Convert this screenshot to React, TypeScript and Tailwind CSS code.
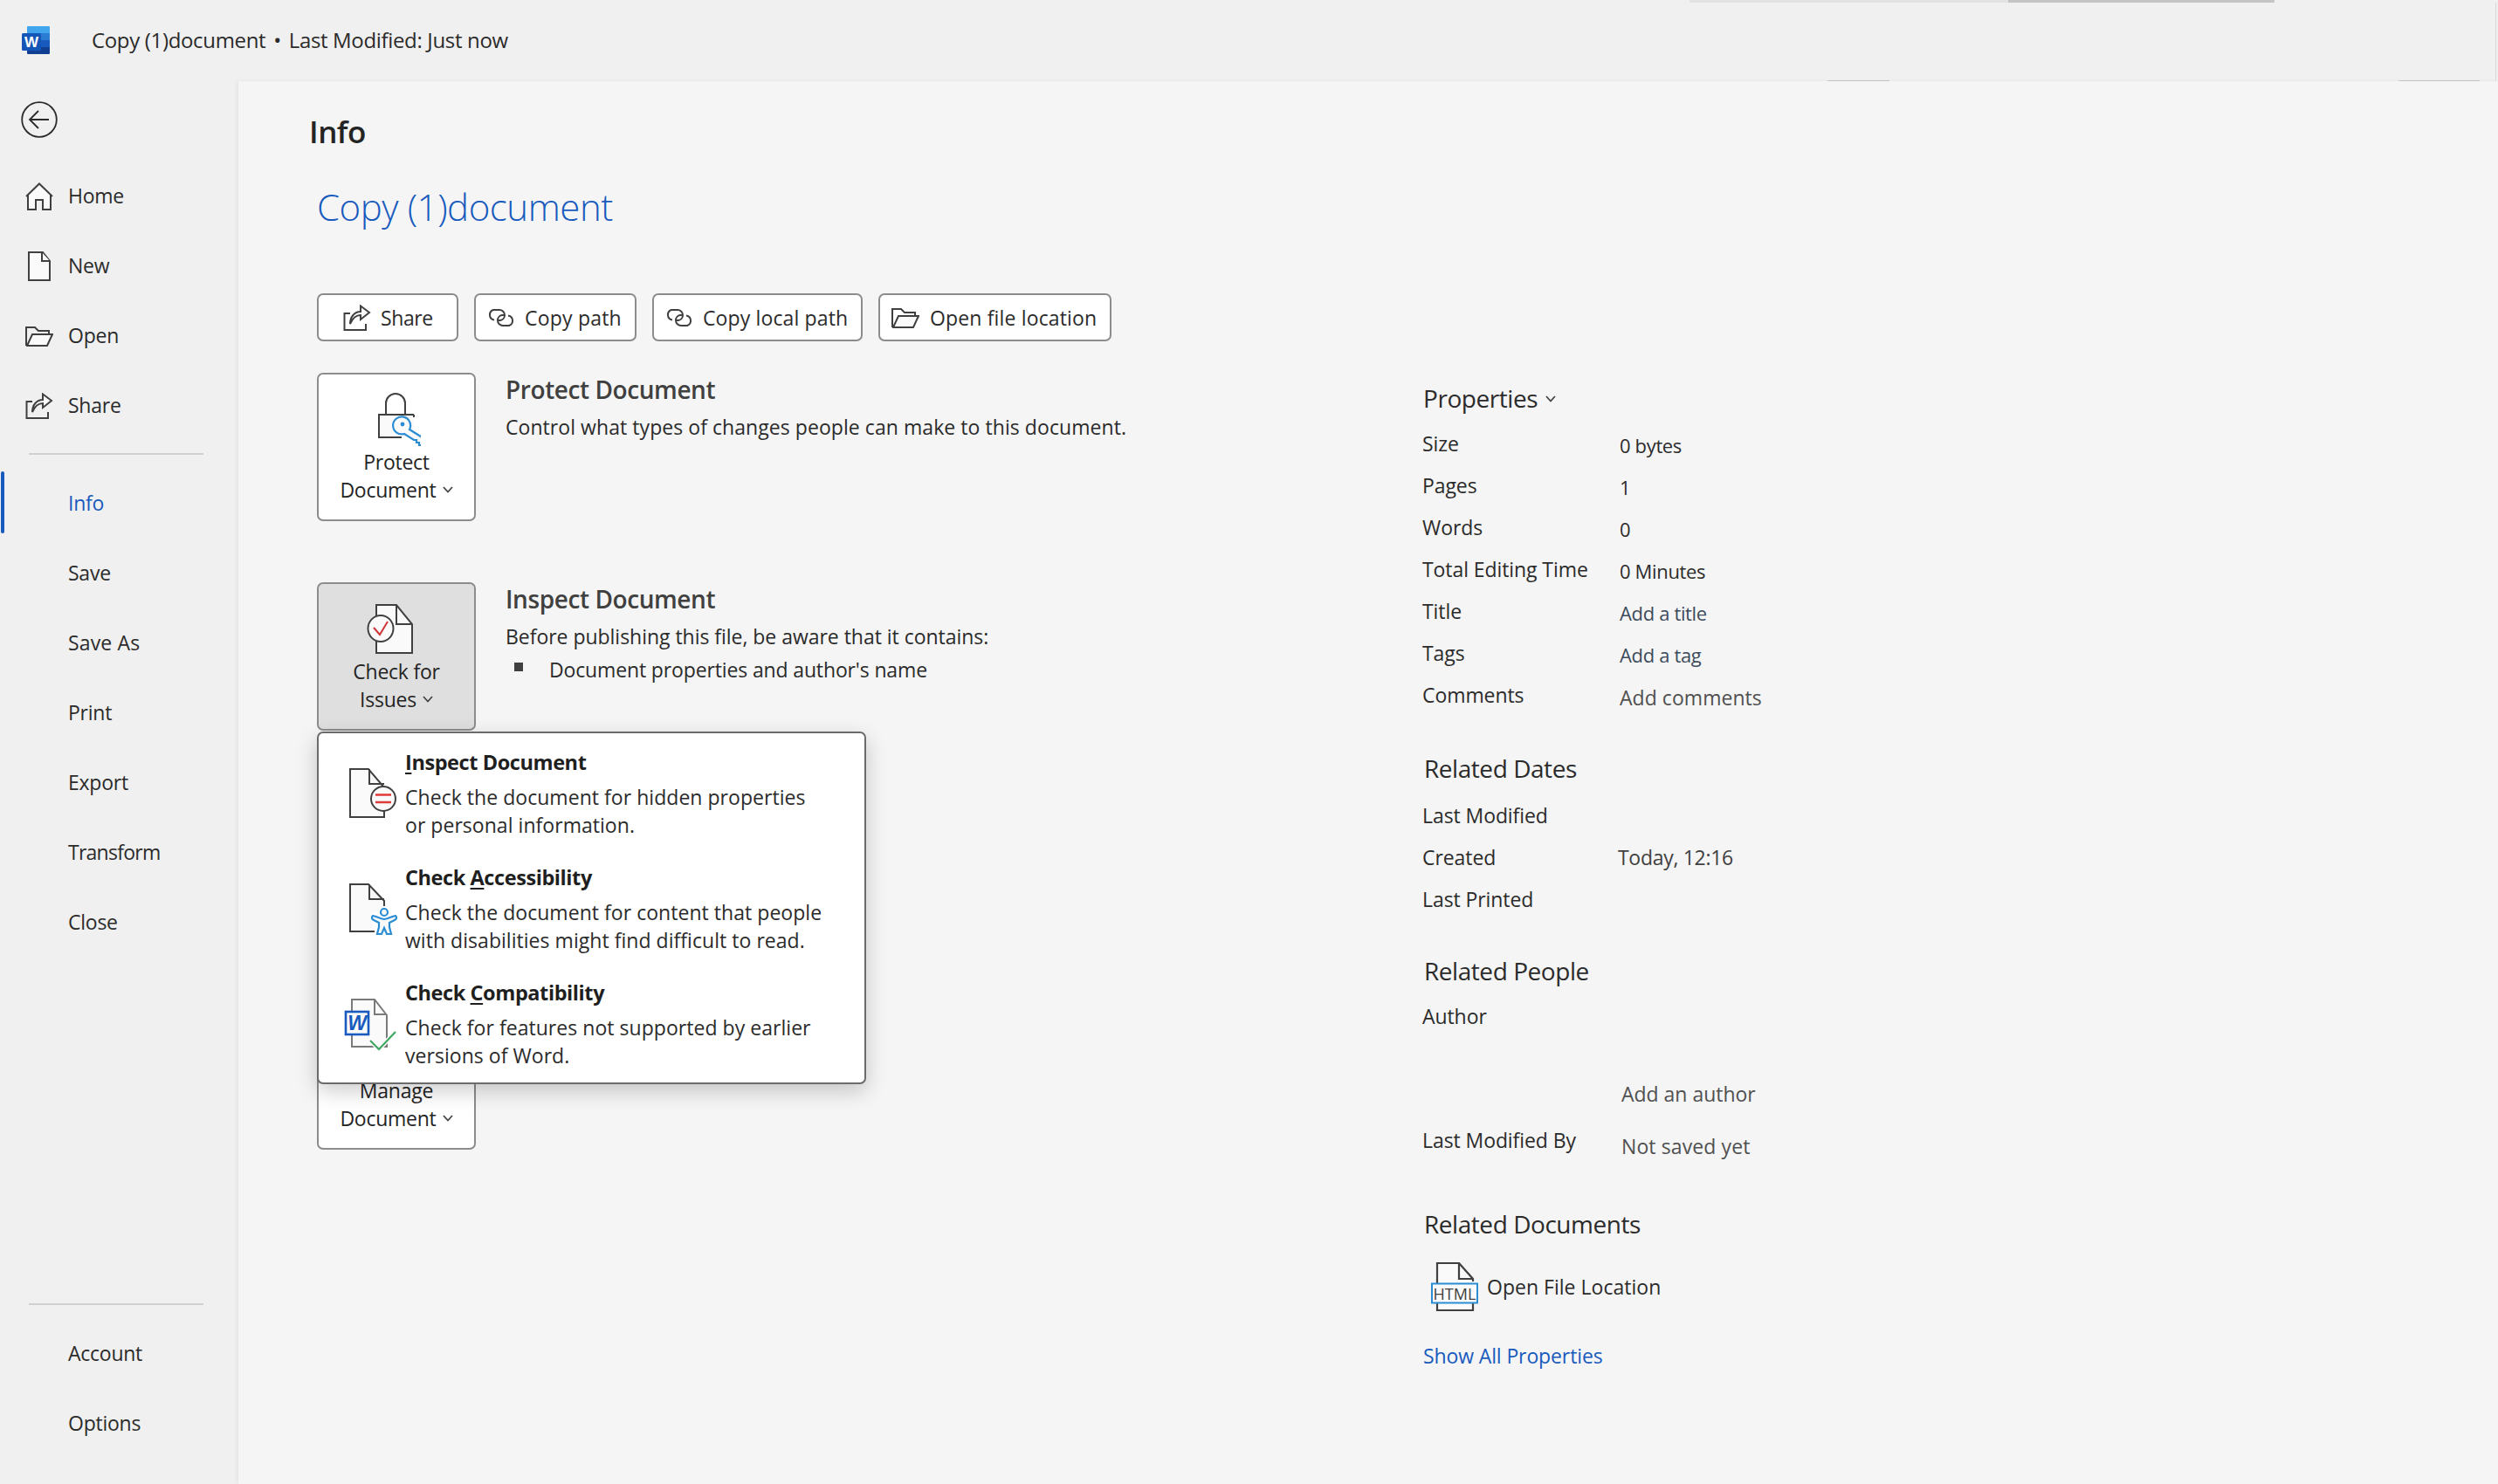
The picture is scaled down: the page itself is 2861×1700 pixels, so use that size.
import React from "react";

const ink = "#404040";

function Home() {
  return (
    <svg width="32" height="32" viewBox="0 0 32 32" fill="none" stroke={ink} strokeWidth="2">
      <path d="M3 13 V31 H12 V20 H20 V31 H29 V13 L16 2 Z" fill="#fafafa" stroke="none" />
      <path d="M1 16 L16 1.5 L31 16" />
      <path d="M3 14 V31 H12 V20 H20 V31 H29 V14" />
    </svg>
  );
}
function NewDoc() {
  return (
    <svg width="32" height="34" viewBox="0 0 32 34" fill="#fafafa" stroke={ink} strokeWidth="2">
      <path d="M4 1 H20 L28 11 V33 H4 Z" />
      <path d="M19 1 V11 H28" />
    </svg>
  );
}
function OpenFolder({ s = 32 }: { s?: number }) {
  return (
    <svg width={s} height={s * 0.75} viewBox="0 0 32 24" fill="none" stroke={ink} strokeWidth="2">
      <path d="M1 23 V2 H11 L15 6 H27 V10" />
      <path d="M1 23 H25 L31 10 H8 L2 23" fill="#fafafa" />
    </svg>
  );
}
function ShareIcon() {
  return (
    <svg width="32" height="30" viewBox="0 0 32 30" fill="none" stroke={ink} strokeWidth="2">
      <path d="M8 10 H1.5 V29 H26 V22" />
      <path d="M8 22 C8 14 13 8 20 8 V1.5 L30 9 L20 17 V12 C15 12 11 15 8 22 Z" fill="#fafafa" />
    </svg>
  );
}
function LinkIcon() {
  return (
    <svg width="34" height="20" viewBox="0 0 34 20" fill="none" stroke={ink} strokeWidth="2">
      <path d="M8 12.6 A6 6 0 0 1 7 1 H14 A6 6 0 0 1 20 7 A6 6 0 0 1 15 13 H12" />
      <path d="M24 7.4 A6 6 0 0 1 25 19 H18 A6 6 0 0 1 12 13 A6 6 0 0 1 17 7 H20" />
    </svg>
  );
}
function Chevron() {
  return (
    <svg width="12" height="8" viewBox="0 0 12 8" fill="none" stroke="#404040" strokeWidth="1.7">
      <path d="M1 1 L6 6.5 L11 1" />
    </svg>
  );
}
function LockKey() {
  return (
    <svg width="56" height="62" viewBox="0 0 56 62" fill="none">
      <g transform="translate(7 1)">
        <path d="M9 23 V11 A11 11 0 0 1 31 11 V23" stroke={ink} strokeWidth="2" />
        <path d="M1 24 H41 V50 H1 Z" fill="#fafafa" />
        <path d="M41 24 H1 V50 H27" stroke={ink} strokeWidth="2" />
        <path d="M41 24 V27" stroke={ink} strokeWidth="2" />
        <path d="M36 41 L52 51 V59 H47 V56 H44 V53 H41 L30 46 A10 10 0 1 1 36 41 Z" fill="#fafafa" stroke="#2a8dd4" strokeWidth="2.2" />
        <circle cx="28" cy="35" r="2.4" fill="#2a8dd4" />
      </g>
    </svg>
  );
}
function CheckIssues() {
  return (
    <svg width="56" height="58" viewBox="0 0 56 58" fill="none" overflow="visible">
      <path d="M5 1 H28 L46 23 V56 H5 Z" fill="#fafafa" stroke={ink} strokeWidth="2" />
      <path d="M28 1 V23 H46" stroke={ink} strokeWidth="2" />
      <ellipse cx="10" cy="28" rx="14.5" ry="15" fill="#fafafa" stroke={ink} strokeWidth="2" />
      <path d="M2 27 L9 35 L18 20" stroke="#d13438" strokeWidth="2" />
    </svg>
  );
}
function InspectIcon() {
  return (
    <svg width="66" height="60" viewBox="0 0 66 60" fill="none">
      <path d="M4 1 H25 L43 22 V56 H4 Z" fill="#fafafa" stroke={ink} strokeWidth="2" />
      <path d="M26 1 V18 H43" stroke={ink} strokeWidth="2" />
      <ellipse cx="42" cy="35" rx="14" ry="14" fill="#fafafa" stroke={ink} strokeWidth="2" />
      <path d="M33 30.5 H51 M33 39 H51" stroke="#e13a3a" strokeWidth="2.4" />
    </svg>
  );
}
function AccessIcon() {
  return (
    <svg width="66" height="60" viewBox="0 0 66 60" fill="none">
      <path d="M4 1 H25 L43 20 V30 L30 34 V55 H4 Z" fill="#fafafa" stroke="none" />
      <path d="M32 55 H4 V1 H25 L43 20 V26" stroke={ink} strokeWidth="2" />
      <path d="M26 1 V18 H43" stroke={ink} strokeWidth="2" />
      <circle cx="43" cy="33" r="4" fill="#fafafa" stroke="#2a8dd4" strokeWidth="2.2" />
      <path d="M30 37 C33 37 38 41 43 41 C48 41 53 37 56 37 C58 39 57 41 55 42 L49 45 V50 L51 58 H46 L43 51 L40 58 H35 L37 50 V45 L31 42 C29 41 28 39 30 37 Z" fill="#fafafa" stroke="#2a8dd4" strokeWidth="2.2" />
    </svg>
  );
}
function CompatIcon() {
  return (
    <svg width="66" height="60" viewBox="0 0 66 60" fill="none" overflow="visible">
      <path d="M6 1 H32 L46 19 V55 H6 Z" fill="#fafafa" stroke="#7a7a7a" strokeWidth="2" />
      <path d="M32 1 V18 H46" stroke="#7a7a7a" strokeWidth="2" />
      <rect x="-1" y="15" width="26" height="26" fill="#fafafa" stroke="#185abd" strokeWidth="2.6" />
      <text x="12" y="36" textAnchor="middle" fontSize="23" fontWeight="700" fontStyle="italic" fill="#185abd" fontFamily="'Liberation Sans', sans-serif">W</text>
      <path d="M27 48 L37 58 L56 38" stroke="#fafafa" strokeWidth="5" />
      <path d="M27 48 L37 58 L56 38" stroke="#3ba55d" strokeWidth="2" />
    </svg>
  );
}
function HtmlIcon() {
  return (
    <svg width="54" height="56" viewBox="0 0 54 56" fill="none">
      <path d="M7 24 V1 H32 L48 19 V22 M7 46 V55 H48 V46" stroke={ink} strokeWidth="2.2" fill="#fafafa" />
      <path d="M32 1 V19 H48" stroke={ink} strokeWidth="2.2" />
      <rect x="1" y="24.5" width="52" height="22" fill="#fafafa" stroke="#2a8dd4" strokeWidth="2" />
      <text x="27" y="43" textAnchor="middle" fontSize="18" fill="#404040" fontFamily="'Open Sans', sans-serif">HTML</text>
    </svg>
  );
}
function WordLogo() {
  return (
    <svg width="32" height="32" viewBox="0 0 32 32">
      <rect x="6" y="0" width="26" height="9" fill="#41a5ee" rx="1" />
      <rect x="6" y="8" width="26" height="8" fill="#2b7cd3" />
      <rect x="6" y="16" width="26" height="8" fill="#185abd" />
      <path d="M6 24 H32 V31 A1 1 0 0 1 31 32 H7 A1 1 0 0 1 6 31 Z" fill="#103f91" />
      <rect x="0" y="8" width="22" height="20" rx="1.5" fill="#1456b8" />
      <text x="11" y="24" textAnchor="middle" fontSize="17" fontWeight="700" fill="#fff" fontFamily="'Liberation Sans', sans-serif">W</text>
    </svg>
  );
}

function NavRow({ label, icon, active, track }: { label: string; icon?: React.ReactNode; active?: boolean; track?: string }) {
  return (
    <div className={`h-[80px] flex items-center text-[23px] ${track ?? "tracking-[-0.25px]"} ${active ? "text-[#185abd]" : "text-[#2b2b2b]"}`}>
      <div className="w-[78px] flex pl-[29px] shrink-0">{icon}</div>
      <span className="pb-[2px]">{label}</span>
    </div>
  );
}

function PillButton({ w, pl, gap, track, icon, label }: { w: string; pl: string; gap: string; track: string; icon: React.ReactNode; label: string }) {
  return (
    <div className={`${w} ${pl} ${gap} ${track} h-[55px] flex items-center bg-white border-2 border-[#8c8c8c] rounded-[7px] text-[23px] text-[#2b2b2b]`}>
      {icon}
      <span className="pt-[2px]">{label}</span>
    </div>
  );
}

function BigButton({ icon, l1, l2, pressed }: { icon?: React.ReactNode; l1: string; l2: string; pressed?: boolean }) {
  return (
    <div className={`w-[182px] h-[170px] shrink-0 flex flex-col items-center pt-[22px] border-2 border-[#8c8c8c] rounded-[7px] text-[23px] leading-[32px] font-medium tracking-[-0.25px] text-[#242424] ${pressed ? "bg-[#dfdfdf]" : "bg-white"}`}>
      <div className="h-[60px] flex items-center justify-center">{icon}</div>
      <div className="mt-[2px]">{l1}</div>
      <div className="flex items-center gap-[7px]">
        {l2}
        <Chevron />
      </div>
    </div>
  );
}

function MenuItem({ icon, pre, u, post, l1, l2 }: { icon: React.ReactNode; pre: string; u: string; post: string; l1: string; l2: string }) {
  return (
    <div className="flex h-[106px]">
      <div className="w-[67px] h-[60px] mt-[24px] shrink-0">{icon}</div>
      <div>
        <div className="h-[36px] leading-[34px] text-[23.5px] font-bold tracking-[-0.42px] text-[#1f1f1f]">
          {pre}
          <span className="underline underline-offset-[3px] decoration-[1.5px]">{u}</span>
          {post}
        </div>
        <div className="mt-[5px] text-[23px] leading-[32px] tracking-[0.04px] text-[#2b2b2b]">
          <div>{l1}</div>
          <div>{l2}</div>
        </div>
      </div>
    </div>
  );
}

function Row({ label, value, tone, pt, vml }: { label: string; value?: string; tone?: string; pt?: string; vml?: string }) {
  return (
    <div className="h-[48px] -ml-[1px] flex items-center text-[23px] tracking-[-0.08px] text-[#2b2b2b]">
      <div className="w-[226px] shrink-0">{label}</div>
      {value && <div className={`${pt ?? "pt-[4px]"} ${vml ?? ""} ${tone ?? "text-[22px] tracking-[-0.35px]"}`}>{value}</div>}
    </div>
  );
}

function Heading({ children, mt }: { children: React.ReactNode; mt: string }) {
  return <div className={`${mt} h-[40px] ml-[1px] flex items-center text-[28px] tracking-[-0.45px] text-[#2b2b2b]`}>{children}</div>;
}

export default function App() {
  return (
    <div className="w-[2861px] h-[1700px] overflow-hidden flex flex-col bg-[#f0f0f0] font-['Open_Sans',sans-serif]">
      <div className="relative h-[93px] shrink-0 flex items-center pl-[25px] pb-[1px]">
        <WordLogo />
        <div className="ml-[48px] text-[24px] tracking-[-0.34px] text-[#2b2b2b]">
          Copy (1)document<span className="mx-[3px]"> • </span>Last Modified: Just now
        </div>
        <div className="absolute top-0 left-[1935px] w-[365px] h-[3px] bg-[#e2e2e2]" />
        <div className="absolute top-0 left-[2300px] w-[305px] h-[3px] bg-[#c4c4c4]" />
        <div className="absolute bottom-0 left-[2093px] w-[71px] h-[1px] bg-[#c4c4c4]" />
        <div className="absolute bottom-0 left-[2747px] w-[93px] h-[1px] bg-[#c4c4c4]" />
        <div className="absolute top-[3px] bottom-0 left-[2858px] w-[1px] bg-[#d8d8d8]" />
      </div>
      <div className="flex flex-1 min-h-0">
        <aside className="w-[273px] shrink-0 flex flex-col relative">
          <div className="pt-[23px] pl-[24px] h-[92px]">
            <svg width="42" height="42" viewBox="0 0 42 42" fill="none" stroke="#2b2b2b" strokeWidth="1.8">
              <circle cx="21" cy="21" r="19.8" />
              <path d="M10 21 H32 M20 11 L10 21 L20 31" />
            </svg>
          </div>
          <NavRow label="Home" icon={<Home />} />
          <NavRow label="New" icon={<NewDoc />} />
          <NavRow label="Open" icon={<OpenFolder />} />
          <NavRow label="Share" icon={<ShareIcon />} />
          <div className="mt-[14px] ml-[33px] w-[200px] h-[2px] bg-[#d0d0d0]" />
          <div className="mt-[16px] relative">
            <div className="absolute left-[1px] top-[3px] w-[4px] h-[71px] rounded-full bg-[#185abd]" />
            <NavRow label="Info" active />
          </div>
          <NavRow label="Save" />
          <NavRow label="Save As" track="tracking-[0.15px]" />
          <NavRow label="Print" />
          <NavRow label="Export" />
          <NavRow label="Transform" track="tracking-[-0.75px]" />
          <NavRow label="Close" />
          <div className="mt-auto ml-[33px] w-[200px] h-[2px] bg-[#d0d0d0]" />
          <div className="mt-[16px] pb-[29px]">
            <NavRow label="Account" />
            <NavRow label="Options" />
          </div>
        </aside>
        <main className="flex-1 flex bg-[#f5f5f5] shadow-[-2px_0_4px_rgba(0,0,0,0.05)]">
          <div className="w-[1357px] shrink-0 pl-[81px] pt-[33px]">
            <div className="h-[50px] leading-[50px] text-[35px] font-semibold tracking-[-0.55px] text-[#242424]">Info</div>
            <div className="ml-[9px] mt-[34px] h-[54px] leading-[54px] text-[42px] font-light tracking-[-0.45px] text-[#185abd]">Copy (1)document</div>
            <div className="ml-[9px] mt-[72px] flex gap-[18px]">
              <PillButton w="w-[162px]" pl="pl-[28px]" gap="gap-[11px]" track="tracking-[-0.4px]" icon={<ShareIcon />} label="Share" />
              <PillButton w="w-[186px]" pl="pl-[13px]" gap="gap-[9px]" track="tracking-[0.2px]" icon={<LinkIcon />} label="Copy path" />
              <PillButton w="w-[241px]" pl="pl-[13px]" gap="gap-[9px]" track="tracking-[0.13px]" icon={<LinkIcon />} label="Copy local path" />
              <PillButton w="w-[267px]" pl="pl-[13px]" gap="gap-[12px]" track="tracking-[0.15px]" icon={<OpenFolder s={32} />} label="Open file location" />
            </div>
            <div className="ml-[9px] mt-[36px] flex gap-[34px]">
              <BigButton icon={<LockKey />} l1="Protect" l2="Document" />
              <div>
                <div className="h-[40px] leading-[38px] text-[28px] font-semibold tracking-[-0.42px] text-[#404040]">Protect Document</div>
                <div className="mt-[3px] text-[23px] leading-[39px] tracking-[0.06px] text-[#2b2b2b]">Control what types of changes people can make to this document.</div>
              </div>
            </div>
            <div className="ml-[9px] mt-[70px] flex gap-[34px] relative">
              <BigButton icon={<CheckIssues />} l1="Check for" l2="Issues" pressed />
              <div>
                <div className="h-[40px] leading-[38px] text-[28px] font-semibold tracking-[-0.42px] text-[#404040]">Inspect Document</div>
                <div className="mt-[3px] text-[23px] leading-[39px] tracking-[-0.03px] text-[#2b2b2b]">Before publishing this file, be aware that it contains:</div>
                <div className="flex items-center text-[23px] leading-[36px] tracking-[-0.14px] text-[#2b2b2b]">
                  <div className="ml-[10px] mr-[30px] mb-[6px] w-[10px] h-[10px] bg-[#404040]" />
                  Document properties and author's name
                </div>
              </div>
              <div className="absolute left-0 top-[171px] w-[629px] h-[404px] pl-[32px] pt-[16px] bg-white border-2 border-[#6b6b6b] rounded-[7px] shadow-[0_8px_24px_rgba(0,0,0,0.2)] z-10 flex flex-col gap-[26px]">
                <MenuItem icon={<InspectIcon />} pre="" u="I" post="nspect Document" l1="Check the document for hidden properties" l2="or personal information." />
                <MenuItem icon={<AccessIcon />} pre="Check " u="A" post="ccessibility" l1="Check the document for content that people" l2="with disabilities might find difficult to read." />
                <MenuItem icon={<CompatIcon />} pre="Check " u="C" post="ompatibility" l1="Check for features not supported by earlier" l2="versions of Word." />
              </div>
            </div>
            <div className="ml-[9px] mt-[310px]">
              <BigButton l1="Manage" l2="Document" />
            </div>
          </div>
          <div className="pt-[343px] w-[600px]">
            <Heading mt="mt-0">
              <span className="-ml-[1px]">Properties</span>
              <span className="ml-[9px] pt-[2px]"><Chevron /></span>
            </Heading>
            <div className="mt-[8px]">
              <Row label="Size" value="0 bytes" />
              <Row label="Pages" value="1" />
              <Row label="Words" value="0" />
              <Row label="Total Editing Time" value="0 Minutes" />
              <Row label="Title" value="Add a title" tone="text-[22px] tracking-[-0.35px] text-[#3d4b5c]" />
              <Row label="Tags" value="Add a tag" tone="text-[22px] tracking-[-0.35px] text-[#3d4b5c]" />
              <Row label="Comments" value="Add comments" tone="tracking-[0.05px] text-[#505050]" pt="pt-[6px]" />
            </div>
            <Heading mt="mt-[40px]">Related Dates</Heading>
            <div className="mt-[10px]">
              <Row label="Last Modified" />
              <Row label="Created" value="Today, 12:16" tone="tracking-[-0.3px] text-[#404040]" pt="pt-0" vml="-ml-[2px]" />
              <Row label="Last Printed" />
            </div>
            <Heading mt="mt-[38px]">Related People</Heading>
            <div className="mt-[8px]">
              <Row label="Author" />
            </div>
            <div className="mt-[41px]">
              <Row label="" value="Add an author" tone="tracking-[-0.02px] text-[#505050]" pt="pt-0" vml="ml-[2px]" />
            </div>
            <div className="mt-[5px]">
              <Row label="Last Modified By" value="Not saved yet" tone="tracking-[0.1px] text-[#505050]" pt="pt-[14px]" vml="ml-[2px]" />
            </div>
            <Heading mt="mt-[52px]">Related Documents</Heading>
            <div className="mt-[24px] ml-[9px] h-[56px] flex items-center gap-[10px] text-[23px] tracking-[0.02px] text-[#2b2b2b]">
              <HtmlIcon />
              <span>Open File Location</span>
            </div>
            <div className="mt-[27px] h-[48px] flex items-center text-[23px] tracking-[-0.12px] text-[#185abd]">Show All Properties</div>
          </div>
        </main>
      </div>
    </div>
  );
}
